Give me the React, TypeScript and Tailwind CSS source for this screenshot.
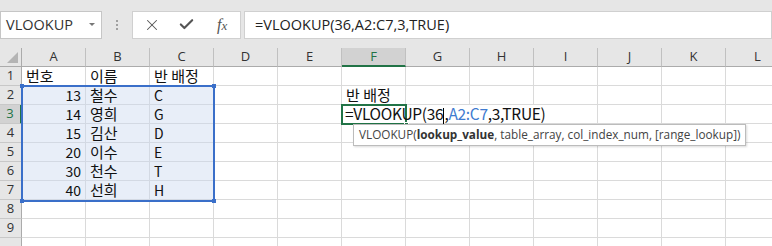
import { X, Check } from "lucide-react"

const cols = ["A", "B", "C", "D", "E", "F", "G", "H", "I", "J", "K", "L"]

// cell contents keyed by "col+row"
const cells: Record<string, { v: string; right?: boolean; latin?: boolean }> = {
  A1: { v: "번호" },
  B1: { v: "이름" },
  C1: { v: "반 배정" },
  A2: { v: "13", right: true, latin: true },
  A3: { v: "14", right: true, latin: true },
  A4: { v: "15", right: true, latin: true },
  A5: { v: "20", right: true, latin: true },
  A6: { v: "30", right: true, latin: true },
  A7: { v: "40", right: true, latin: true },
  B2: { v: "철수" },
  B3: { v: "영희" },
  B4: { v: "김산" },
  B5: { v: "이수" },
  B6: { v: "천수" },
  B7: { v: "선희" },
  C2: { v: "C", latin: true },
  C3: { v: "G", latin: true },
  C4: { v: "D", latin: true },
  C5: { v: "E", latin: true },
  C6: { v: "T", latin: true },
  C7: { v: "H", latin: true },
  F2: { v: "반 배정" },
}

const ui = { fontFamily: '"Open Sans", "Noto Sans", sans-serif' }
const kr = { fontFamily: '"Noto Sans CJK KR", "Noto Sans", sans-serif' }

export default function App() {
  const rows = [1, 2, 3, 4, 5, 6, 7, 8, 9, 10]

  return (
    <div className="w-[772px] h-[246px] overflow-hidden bg-[#e6e6e6]" style={ui}>
      {/* formula bar */}
      <div className="flex items-center h-[48px] pt-[1px]">
        <div className="flex items-center justify-between w-[102px] h-[28px] bg-white border border-[#c6c6c6] pl-[5px] pr-[6px]">
          <span className="text-[14.5px] text-[#333]">VLOOKUP</span>
          <span className="w-0 h-0 border-l-[3px] border-r-[3px] border-t-[3px] border-l-transparent border-r-transparent border-t-[#777]" />
        </div>
        <div className="flex flex-col gap-[2px] w-[30px] items-center">
          <span className="w-[2px] h-[2px] bg-[#a0a0a0]" />
          <span className="w-[2px] h-[2px] bg-[#a0a0a0]" />
          <span className="w-[2px] h-[2px] bg-[#a0a0a0]" />
        </div>
        <div className="flex items-center w-[109px] h-[28px] bg-white border border-[#d0d0d0]">
          <div className="w-[36px] flex justify-center pl-[2px]">
            <X className="w-[18px] h-[18px] text-[#555]" strokeWidth={1.4} />
          </div>
          <div className="w-[36px] flex justify-center">
            <Check className="w-[17px] h-[17px] text-[#555]" strokeWidth={3} />
          </div>
          <div className="w-[36px] flex justify-center">
            <span className="italic text-[16px] text-[#555]" style={{ fontFamily: '"Liberation Serif", serif' }}>
              f<span className="text-[13px]">x</span>
            </span>
          </div>
        </div>
        <div className="flex-1 ml-[3px] h-[28px] bg-white border border-[#d0d0d0] pl-[10px] flex items-center">
          <span className="text-[14.5px] text-[#222]">=VLOOKUP(36,A2:C7,3,TRUE)</span>
        </div>
      </div>

      {/* sheet */}
      <div className="relative">
        <div className="grid grid-cols-[22px_repeat(12,64px)] auto-rows-[19px]">
          {/* corner */}
          <div className="flex items-end justify-end p-[3px] border-r border-b border-[#ababab] bg-[#e6e6e6]">
            <svg width="11" height="11" viewBox="0 0 11 11">
              <polygon points="11,0 11,11 0,11" fill="#b4b4b4" />
            </svg>
          </div>
          {cols.map((c) => (
            <div
              key={c}
              className={
                c === "F"
                  ? "flex items-center justify-center text-[13px] border-r border-[#c0c0c0] border-b-2 border-b-[#217346] bg-[#d2d2d2] text-[#217346]"
                  : "flex items-center justify-center text-[13px] border-r border-b border-[#c0c0c0] border-b-[#ababab] text-[#333]"
              }
            >
              {c}
            </div>
          ))}
          {rows.map((r) => (
            <>
              <div
                key={"h" + r}
                className={
                  r === 3
                    ? "flex items-center justify-center text-[13px] border-b border-[#c8c8c8] border-r-2 border-r-[#217346] bg-[#d2d2d2] text-[#217346]"
                    : "flex items-center justify-center text-[13px] border-b border-[#c8c8c8] border-r border-r-[#ababab] text-[#333]"
                }
              >
                {r < 10 ? r : ""}
              </div>
              {cols.map((c, ci) => {
                const cell = cells[c + r]
                const sel = ci < 3 && r >= 2 && r <= 7
                return (
                  <div
                    key={c + r}
                    className={
                      (sel ? "bg-[#e8eef8] border-[#d3d9e3] " : "bg-white border-[#dadada] ") +
                      "border-r border-b flex items-center px-[4px] text-[#111] " +
                      (cell?.right ? "justify-end" : "justify-start")
                    }
                  >
                    {cell && (
                      <span className={cell.latin ? "text-[14px]" : "text-[15px]"} style={kr}>
                        {cell.v}
                      </span>
                    )}
                  </div>
                )
              })}
            </>
          ))}
        </div>

        {/* selected range A2:C7 */}
        <div className="absolute left-[21px] top-[37px] w-[194px] h-[117px] border-2 border-[#3a6fc9] pointer-events-none" />
        <span className="absolute left-[20px] top-[36px] w-[4px] h-[4px] bg-[#3a6fc9]" />
        <span className="absolute left-[212px] top-[36px] w-[4px] h-[4px] bg-[#3a6fc9]" />
        <span className="absolute left-[20px] top-[151px] w-[4px] h-[4px] bg-[#3a6fc9]" />
        <span className="absolute left-[212px] top-[151px] w-[4px] h-[4px] bg-[#3a6fc9]" />

        {/* editing cell F3 */}
        <div className="absolute left-[342px] top-[57px] w-[214px] h-[18px] bg-white" />
        <div className="absolute left-[341px] top-[56px] w-[66px] h-[21px] border-2 border-[#217346] pointer-events-none" />
        <span className="absolute left-[404px] top-[74px] w-[5px] h-[5px] bg-[#217346] border border-white" />
        <div className="absolute left-[342px] top-[57px] h-[18px] flex items-center pl-[3px]" style={kr}>
          <span className="text-[15.5px] tracking-[-0.3px] text-[#111] whitespace-nowrap">
            =VLOOKUP(36<span className="inline-block w-[1px] h-[16px] bg-black align-middle" />,<span className="text-[#3f7bd0]">A2:C7</span>,3,TRUE)
          </span>
        </div>

        {/* function tooltip */}
        <div className="absolute left-[353px] top-[76px] h-[22px] px-[5px] flex items-center bg-white border border-[#bcbcbc] shadow-[1px_1px_2px_rgba(0,0,0,0.15)] text-[11.75px] text-[#444] whitespace-nowrap">
          VLOOKUP(<b className="font-bold text-[#333]">lookup_value</b>, table_array, col_index_num, [range_lookup])
        </div>
      </div>
    </div>
  )
}
